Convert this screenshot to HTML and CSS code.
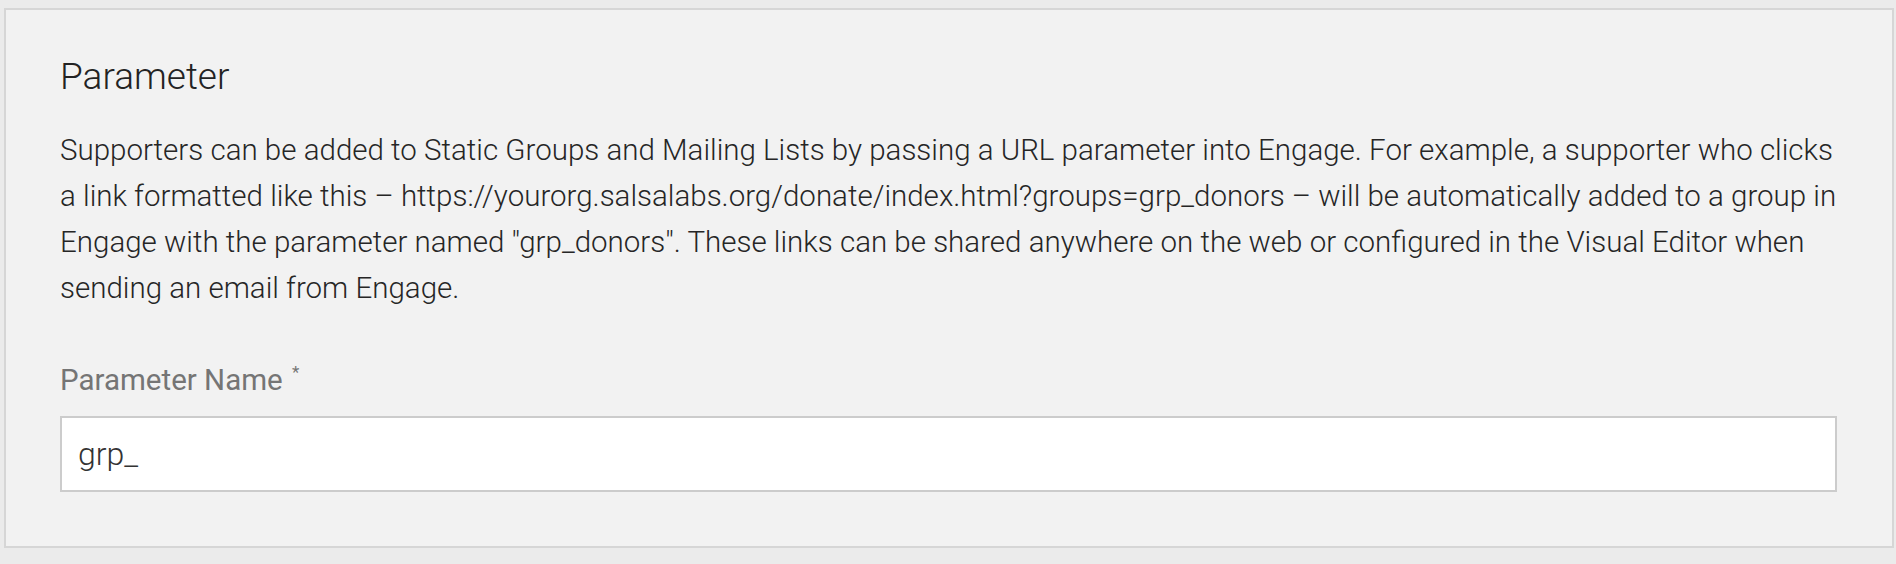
FILE: index.html
```html
<!DOCTYPE html>
<html>
<head>
<meta charset="utf-8">
<link rel="stylesheet" href="styles.css">
</head>
<body>
<section class="panel">
  <h2 class="title">Parameter</h2>
  <p class="desc">Supporters can be added to Static Groups and Mailing Lists by passing a URL parameter into Engage. For example, a supporter who clicks a link formatted like this – https://yourorg.salsalabs.org/donate/index.html?groups=grp_donors – will be automatically added to a group in Engage with the parameter named "grp_donors". These links can be shared anywhere on the web or configured in the Visual Editor when sending an email from Engage.</p>
  <label class="label" for="pname">Parameter Name <sup class="req">*</sup></label>
  <input class="field" id="pname" type="text" value="grp_">
</section>
</body>
</html>
```
FILE: styles.css
```css
html, body {
  margin: 0;
  padding: 0;
  background: #ebebeb;
}
body {
  padding: 8px 2px 16px 4px;
  font-family: Roboto, "Liberation Sans", sans-serif;
}
.panel {
  background: #f2f2f2;
  border: 2px solid #d6d6d6;
  box-sizing: border-box;
  height: 540px;
  padding: 45px 55px 0 54px;
  display: flex;
  flex-direction: column;
}
.title {
  margin: 0;
  font-weight: 300;
  font-size: 37px;
  line-height: 44px;
  color: #232323;
}
.desc {
  margin: 28px 0 0 0;
  font-weight: 300;
  font-size: 29.5px;
  line-height: 46px;
  color: #262626;
}
.label {
  margin-top: 51px;
  font-size: 29.5px;
  line-height: 36px;
  color: #757575;
}
.req {
  font-size: 17px;
  vertical-align: top;
  position: relative;
  top: -8px;
  margin-left: 2px;
}
.field {
  margin-top: 18px;
  box-sizing: border-box;
  width: 100%;
  height: 76px;
  border: 2px solid #cccccc;
  background: #fff;
  padding: 0 16px;
  font-family: Roboto, "Liberation Sans", sans-serif;
  font-weight: 300;
  font-size: 32px;
  color: #333;
  outline: none;
}
```
